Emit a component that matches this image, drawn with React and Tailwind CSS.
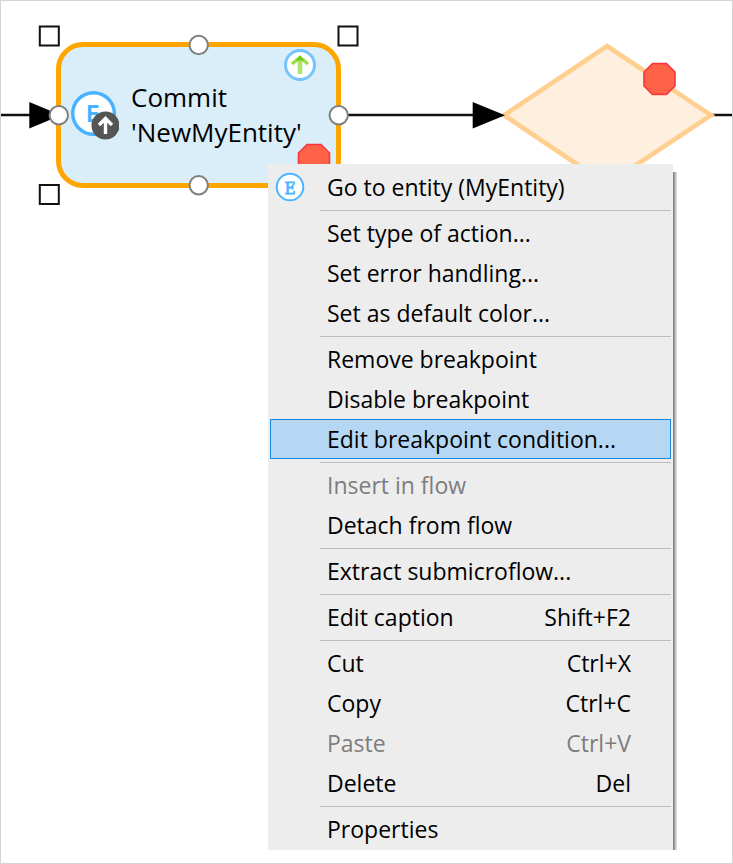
const menuGroups = [
  [{ label: "Go to entity (MyEntity)", icon: true }],
  [
    { label: "Set type of action..." },
    { label: "Set error handling..." },
    { label: "Set as default color..." },
  ],
  [
    { label: "Remove breakpoint" },
    { label: "Disable breakpoint" },
    { label: "Edit breakpoint condition...", active: true },
  ],
  [{ label: "Insert in flow", disabled: true }, { label: "Detach from flow" }],
  [{ label: "Extract submicroflow..." }],
  [{ label: "Edit caption", shortcut: "Shift+F2" }],
  [
    { label: "Cut", shortcut: "Ctrl+X" },
    { label: "Copy", shortcut: "Ctrl+C" },
    { label: "Paste", shortcut: "Ctrl+V", disabled: true },
    { label: "Delete", shortcut: "Del" },
  ],
  [{ label: "Properties" }],
];

function EntityIcon() {
  return (
    <svg viewBox="0 0 30 30" className="h-[30px] w-[30px]" aria-hidden="true">
      <circle cx="15" cy="15" r="13.3" fill="#fff" stroke="#4db5ff" strokeWidth="2" />
      <text
        x="15"
        y="21.5"
        textAnchor="middle"
        fill="#4db5ff"
        stroke="#4db5ff"
        strokeWidth="0.8"
        className="font-['DejaVu_Serif_Condensed','DejaVu_Serif',serif] text-[17px]"
      >
        E
      </text>
    </svg>
  );
}

function CommitIcon() {
  return (
    <svg viewBox="0 0 50 52" className="h-[52px] w-[50px] shrink-0" aria-hidden="true">
      <circle cx="24.5" cy="24.5" r="20.8" fill="#fff" stroke="#47b2ff" strokeWidth="3.4" />
      <text
        x="24"
        y="33"
        textAnchor="middle"
        fill="#47b2ff"
        className="font-['DejaVu_Sans_Mono',monospace] text-[23px] font-bold"
      >
        E
      </text>
      <circle cx="36.500" cy="36.500" r="14" fill="#555" />
      <path d="M36.500 45V30M30 36l6.500-6.500L43 36" fill="none" stroke="#fff" strokeWidth="3.4" />
    </svg>
  );
}

function Breakpoint({ x, y }) {
  return (
    <path
      transform={`translate(${x} ${y})`}
      d="M-7-15.500H7L15.500-7V7L7 15.500H-7L-15.500 7V-7Z"
      fill="#ff6347"
      stroke="#f5363f"
      strokeWidth="1.600"
    />
  );
}

function Connectors() {
  return (
    <svg className="absolute inset-0 h-full w-full" aria-hidden="true">
      <g transform="translate(-1 -1)">
        <path d="M0 115H34M340 115H476M710 115H4000" stroke="#111" strokeWidth="2.400" />
        <path d="M29.300 102V128.500L61 115.200Z" fill="#000" />
        <path
          d="M607 46L711 115.200L607 184.500L504 115.200Z"
          fill="#ffefde"
          stroke="#ffcf8f"
          strokeWidth="4.600"
        />
        <path d="M472.700 102V128.500L505 115.200Z" fill="#000" />
        <Breakpoint x={659.5} y={79} />
      </g>
    </svg>
  );
}

const ports = [
  [198.7, 45],
  [198.7, 185.2],
  [58.8, 115.2],
  [338.7, 115.2],
];
const corners = [
  [49.3, 36],
  [348, 36],
  [49.3, 194.5],
];

function Decorations() {
  return (
    <svg className="absolute inset-0 h-full w-full" aria-hidden="true">
      <g transform="translate(-1 -1)">
        <circle cx="300" cy="65" r="14.500" fill="#fff" stroke="#74c4fb" strokeWidth="3" />
        <path d="M300 74V60" stroke="#b0e56c" strokeWidth="4.600" />
        <path d="M292 64L300 57.500L308 64" fill="none" stroke="#9bdc48" strokeWidth="3.400" />
        <path d="M296 60.500L300 55.500L304 60.500Z" fill="#6fca10" />
        <Breakpoint x={314} y={160} />
        {ports.map(([x, y]) => (
          <circle key={`${x}-${y}`} cx={x} cy={y} r="9.200" fill="#fff" stroke="#808080" strokeWidth="2" />
        ))}
        {corners.map(([x, y]) => (
          <rect
            key={`${x}-${y}`}
            x={x - 9.5}
            y={y - 9.5}
            width="19"
            height="19"
            fill="#fff"
            stroke="#111"
            strokeWidth="2"
          />
        ))}
      </g>
    </svg>
  );
}

function MenuItem({ label, shortcut, icon, active, disabled }) {
  const tone = active
    ? "border-[#1a86dc] bg-[#b5d7f3] text-black"
    : disabled
      ? "border-transparent text-[#7d7d7d]"
      : "border-transparent text-black";
  return (
    <button
      type="button"
      role="menuitem"
      disabled={disabled}
      className={`flex h-10 w-full items-center border pr-[39px] text-left ${tone}`}
    >
      <span className="flex w-14 shrink-0 pl-1">{icon && <EntityIcon />}</span>
      <span className="grow whitespace-nowrap">{label}</span>
      {shortcut && <span className="whitespace-nowrap">{shortcut}</span>}
    </button>
  );
}

export default function App() {
  return (
    <main className="relative min-h-screen overflow-hidden border border-[#d4d4d4] bg-white pt-[163px] pb-3 pl-[267px] font-['Open_Sans','Noto_Sans',sans-serif] text-[23px]">
      <Connectors />
      <section className="absolute top-[41px] left-[55px] flex h-[146px] w-[285px] items-center rounded-[27px] border-[5px] border-[#ffa500] bg-[#daeef9] pl-2">
        <CommitIcon />
        <p className="pl-3 text-[26px] leading-[35px] whitespace-nowrap text-black">
          Commit
          <br />
          'NewMyEntity'
        </p>
      </section>
      <Decorations />
      <div
        role="menu"
        aria-label="Activity actions"
        className="relative w-[405px] bg-[#ededed] px-0.5 pt-[3px] pb-px"
      >
        <div className="absolute top-2 bottom-0 left-full w-1 bg-linear-to-r from-[#777] to-[#eee]" />
        {menuGroups.map((group, i) => (
          <div key={group[0].label}>
            {i > 0 && <hr className="mt-[3px] mb-0.5 ml-[50px] border-t border-[#bdbdbd]" />}
            {group.map((item) => (
              <MenuItem key={item.label} {...item} />
            ))}
          </div>
        ))}
      </div>
    </main>
  );
}
